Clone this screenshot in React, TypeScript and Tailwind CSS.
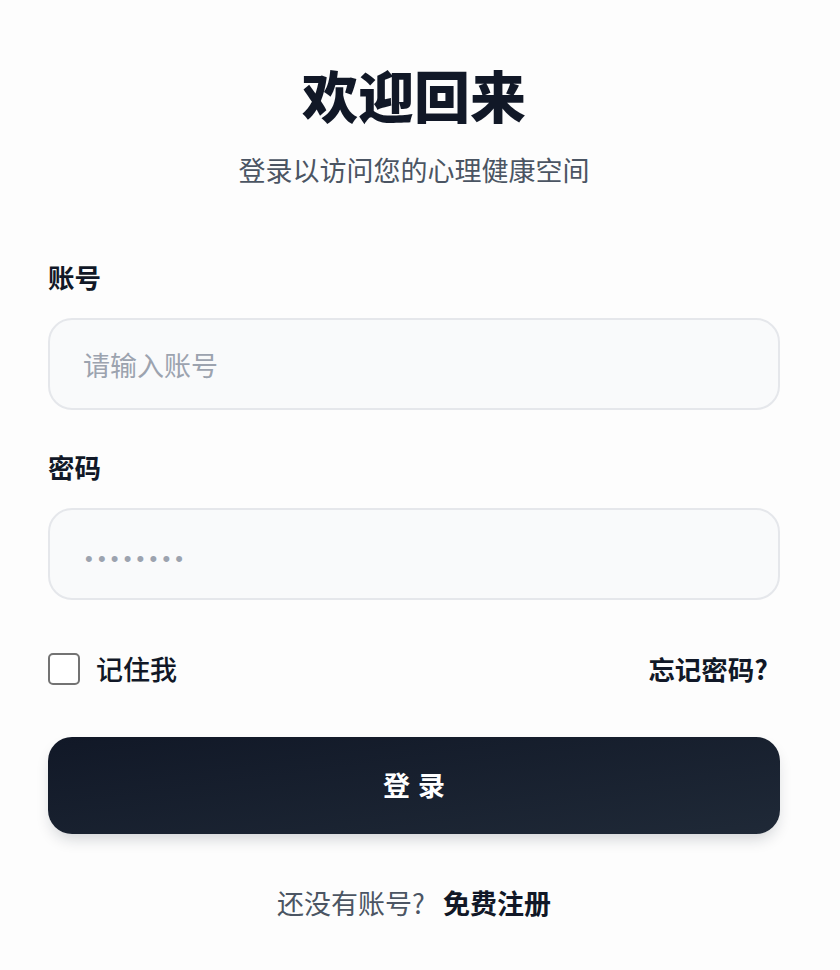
import React from "react";

export default function App() {
  return (
    <div
      className="min-h-[970px] w-full bg-[#fdfdfd] text-[#111827]"
      style={{ fontFamily: '"Noto Sans CJK SC", "Noto Sans", sans-serif' }}
    >
      <div className="flex w-[828px] flex-col px-[48px] pt-[59px]">
        <h1 className="text-center text-[56px] font-black leading-[70px] text-[#111827]">
          欢迎回来
        </h1>
        <p className="mt-[23px] text-center text-[27px] leading-[36px] text-[#4b5563]">
          登录以访问您的心理健康空间
        </p>

        <label className="mt-[71px] text-[26.5px] font-semibold leading-[36px] text-[#111827]">
          账号
        </label>
        <input
          type="text"
          placeholder="请输入账号"
          className="mt-[23px] h-[92px] w-full rounded-[24px] border-2 border-[#e5e7eb] bg-[#f9fafb] px-[33px] text-[27px] text-[#111827] outline-none placeholder:text-[#9ca3af]"
        />

        <label className="mt-[39px] text-[26.5px] font-semibold leading-[36px] text-[#111827]">
          密码
        </label>
        <input
          type="password"
          placeholder="••••••••"
          className="mt-[23px] h-[92px] w-full rounded-[24px] border-2 border-[#e5e7eb] bg-[#f9fafb] pl-[35px] pr-[34px] text-[27px] text-[#111827] outline-none placeholder:font-['Liberation_Sans'] placeholder:text-[22px] placeholder:tracking-[5.2px] placeholder:text-[#9ca3af]"
        />

        <div className="mt-[51px] flex h-[36px] items-center justify-between">
          <label className="flex items-center gap-[16px]">
            <input
              type="checkbox"
              className="h-[32px] w-[32px] appearance-none rounded-[5px] border-2 border-[#737373] bg-white"
            />
            <span className="text-[27px] font-medium leading-[36px] text-[#111827]">
              记住我
            </span>
          </label>
          <a className="pr-[12px] text-[26.5px] font-bold leading-[36px] text-[#111827]">
            忘记密码?
          </a>
        </div>

        <button className="mt-[50px] h-[97px] w-full rounded-[24px] bg-gradient-to-br from-[#111827] to-[#1f2937] pl-[8px] text-[27px] font-bold tracking-[8px] text-white shadow-[0_8px_16px_-4px_rgba(17,24,39,0.2)]">
          登录
        </button>

        <p className="mt-[51px] text-center text-[27px] leading-[36px] text-[#4b5563]">
          还没有账号?
          <a className="ml-[18px] font-bold text-[#111827]">免费注册</a>
        </p>
      </div>
    </div>
  );
}
